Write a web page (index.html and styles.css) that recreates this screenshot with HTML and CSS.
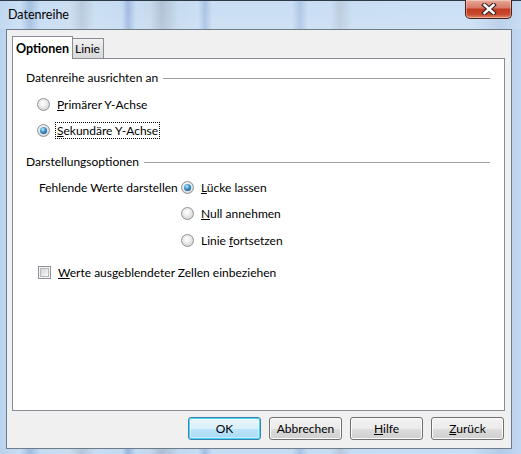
FILE: index.html
```html
<!DOCTYPE html>
<html lang="de">
<head>
    <meta charset="UTF-8">
    <title>Datenreihe</title>
    <link rel="stylesheet" href="styles.css">
</head>
<body>
    <div class="window">
        <div class="titlebar">
            <span class="title">Datenreihe</span>
            <div class="close-btn">
                <svg width="16" height="12" viewBox="0 0 16 12">
                    <path d="M3.5 2 L12.5 10 M12.5 2 L3.5 10" stroke="#3a2320" stroke-width="4.6" stroke-linecap="square" fill="none"/>
                    <path d="M3.5 2 L12.5 10 M12.5 2 L3.5 10" stroke="#fff" stroke-width="2.4" stroke-linecap="square" fill="none"/>
                </svg>
            </div>
        </div>

        <div class="client">
            <div class="tabs">
                <div class="tab active">Optionen</div>
                <div class="tab">Linie</div>
            </div>

            <div class="tab-page">
                <div class="group-title"><span>Datenreihe ausrichten an</span></div>

                <div class="option opt-first">
                    <span class="radio"></span>
                    <span class="label"><u>P</u>rimärer Y-Achse</span>
                </div>
                <div class="option opt-second">
                    <span class="radio on"></span>
                    <span class="label focused"><u>S</u>ekundäre Y-Achse</span>
                </div>

                <div class="group-title group-two"><span>Darstellungsoptionen</span></div>

                <div class="missing">
                    <div class="missing-label">Fehlende Werte darstellen</div>
                    <div class="missing-choices">
                        <div class="option">
                            <span class="radio on"></span>
                            <span class="label"><u>L</u>ücke lassen</span>
                        </div>
                        <div class="option">
                            <span class="radio"></span>
                            <span class="label"><u>N</u>ull annehmen</span>
                        </div>
                        <div class="option">
                            <span class="radio"></span>
                            <span class="label">Linie <u>f</u>ortsetzen</span>
                        </div>
                    </div>
                </div>

                <div class="option opt-check">
                    <span class="checkbox"></span>
                    <span class="label"><u>W</u>erte ausgeblendeter Zellen einbeziehen</span>
                </div>
            </div>

            <div class="buttons">
                <button class="btn default">OK</button>
                <button class="btn">Abbrechen</button>
                <button class="btn"><u>H</u>ilfe</button>
                <button class="btn"><u>Z</u>urück</button>
            </div>
        </div>
    </div>
</body>
</html>
```

FILE: styles.css
```css
body {
    margin: 0;
    font-family: Lato, "Noto Sans", sans-serif;
    font-size: 12px;
    color: #000;
}
.window {
    width: 521px;
    height: 454px;
    box-sizing: border-box;
    border-top: 1px solid #2c3a48;
    background:
        linear-gradient(to right,
            #b9d3ee 0, #c7ddf3 20px, #9fbbe0 30px, #c3dbf2 40px,
            #c8dcf0 70px, #b4c6db 82px, #c6dcf2 95px,
            #c2d9f1 122px, #9ab5dc 128px, #c4dbf2 136px,
            #c3d7ec 150px, #acbdd2 162px, #c2d8ef 178px,
            #c6dcf3 198px, #a4bfe2 205px, #c6dcf3 212px,
            #c6dcf3 292px, #a9c3e4 300px, #c6dcf3 308px,
            #c6dcf3 330px, #b8c9dd 340px, #c6dcf3 352px,
            #c8def4 470px, #b3cbe7 500px, #c0d8f0 521px);
    display: flex;
    flex-direction: column;
}
.titlebar {
    height: 28px;
    position: relative;
    background: linear-gradient(to bottom, rgba(255,255,255,0.05), rgba(255,255,255,0.15));
}
.title {
    position: absolute;
    left: 8px;
    top: 6px;
    line-height: 16px;
    font-size: 12.5px;
    color: #000;
}
.close-btn {
    position: absolute;
    left: 465px;
    top: -1px;
    width: 47px;
    height: 19px;
    box-sizing: border-box;
    border: 1px solid #4b1f1a;
    border-top: none;
    border-radius: 0 0 5px 5px;
    background: linear-gradient(to bottom, #e8a898 0, #d77764 45%, #c23a21 50%, #c74a2e 80%, #e08a6c 100%);
    box-shadow: inset 0 0 0 1px rgba(255,255,255,0.35);
    display: flex;
    align-items: center;
    justify-content: center;
}
.client {
    margin: 0 9px 0 6px;
    height: 420px;
    box-sizing: border-box;
    border: 1px solid #6e7b88;
    background: #f0f0f0;
    padding: 5px 6px 0 5px;
    display: flex;
    flex-direction: column;
}

/* tabs */
.tabs {
    display: flex;
    align-items: flex-end;
    height: 23px;
    position: relative;
    z-index: 1;
}
.tab {
    height: 20px;
    box-sizing: border-box;
    padding: 1px 3px 0 2px;
    border: 1px solid #898c95;
    border-bottom: none;
    border-left: none;
    background: linear-gradient(to bottom, #f2f2f2, #e3e3e3 50%, #d9d9d9);
    line-height: 17px;
}
.tab.active {
    height: 23px;
    width: 61px;
    border-left: 1px solid #898c95;
    background: #fff;
    font-weight: bold;
    font-size: 12.5px;
    padding: 3px 0 0 3px;
    margin-bottom: -1px;
    line-height: 17px;
}
.tab-page {
    height: 353px;
    box-sizing: border-box;
    border: 1px solid #898c95;
    background: #fff;
    padding: 11px 14px 0 13px;
}

.group-title {
    display: flex;
    align-items: center;
    line-height: 16px;
}
.group-title::after {
    content: "";
    flex: 1;
    height: 1px;
    background: #a0a0a0;
    margin-left: 5px;
    margin-top: 1px;
}
.group-two {
    margin-top: 15px;
}

.option {
    display: flex;
    align-items: center;
    height: 17px;
}
.opt-first {
    margin: 10px 0 0 11px;
}
.opt-second {
    margin: 9px 0 0 11px;
}
.opt-check {
    margin: 15px 0 0 12px;
}
.label {
    line-height: 15px;
    margin-left: 5px;
    padding: 0 1px;
    border: 1px solid transparent;
    white-space: nowrap;
}
.label.focused {
    border: 1px dotted #000;
}

.radio {
    position: relative;
    width: 13px;
    height: 13px;
    box-sizing: border-box;
    border-radius: 50%;
    border: 1px solid #8f9296;
    background: radial-gradient(circle at 45% 40%, #ffffff 0, #f0f0f0 35%, #cfd1d3 80%, #e6e6e6 100%);
    flex: none;
}
.radio.on::after {
    content: "";
    position: absolute;
    left: 2px;
    top: 2px;
    width: 7px;
    height: 7px;
    border-radius: 50%;
    background: radial-gradient(circle at 40% 35%, #c2eafc 0, #4fa3d9 35%, #185d96 75%, #0f3f6b 100%);
}
.checkbox {
    width: 13px;
    height: 13px;
    box-sizing: border-box;
    border: 1px solid #8f9296;
    background: #f4f4f4;
    flex: none;
    position: relative;
}
.checkbox::after {
    content: "";
    position: absolute;
    inset: 1px;
    border: 1px solid #b5b8bc;
    background: linear-gradient(135deg, #d2d3d5, #f8f8f8);
}

.missing {
    display: flex;
    margin: 9px 0 0 13px;
}
.missing-label {
    line-height: 17px;
    width: 142px;
    white-space: nowrap;
}
.missing-choices {
    display: flex;
    flex-direction: column;
    gap: 9px;
}
.missing-choices .option:last-child {
    margin-top: 1px;
}

/* dialog buttons */
.buttons {
    display: flex;
    justify-content: flex-end;
    gap: 8px;
    margin-top: 6px;
    padding-right: 1px;
}
.btn {
    width: 73px;
    height: 23px;
    box-sizing: border-box;
    border: 1px solid #707070;
    border-radius: 3px;
    background: linear-gradient(to bottom, #f2f2f2 0, #ebebeb 50%, #dddddd 50%, #cfcfcf 100%);
    box-shadow: inset 0 0 0 1px #fcfcfc;
    font-family: inherit;
    font-size: 12px;
    color: #000;
    padding: 0;
    line-height: 19px;
}
.btn.default {
    border-color: #3c7fb1;
    background: linear-gradient(to bottom, #eaf6fd 0, #d9f0fc 50%, #bee6fd 50%, #a7d9f5 100%);
    box-shadow: inset 0 0 0 1px #48d8f8, inset 0 0 0 2px rgba(255,255,255,0.4);
}
```
